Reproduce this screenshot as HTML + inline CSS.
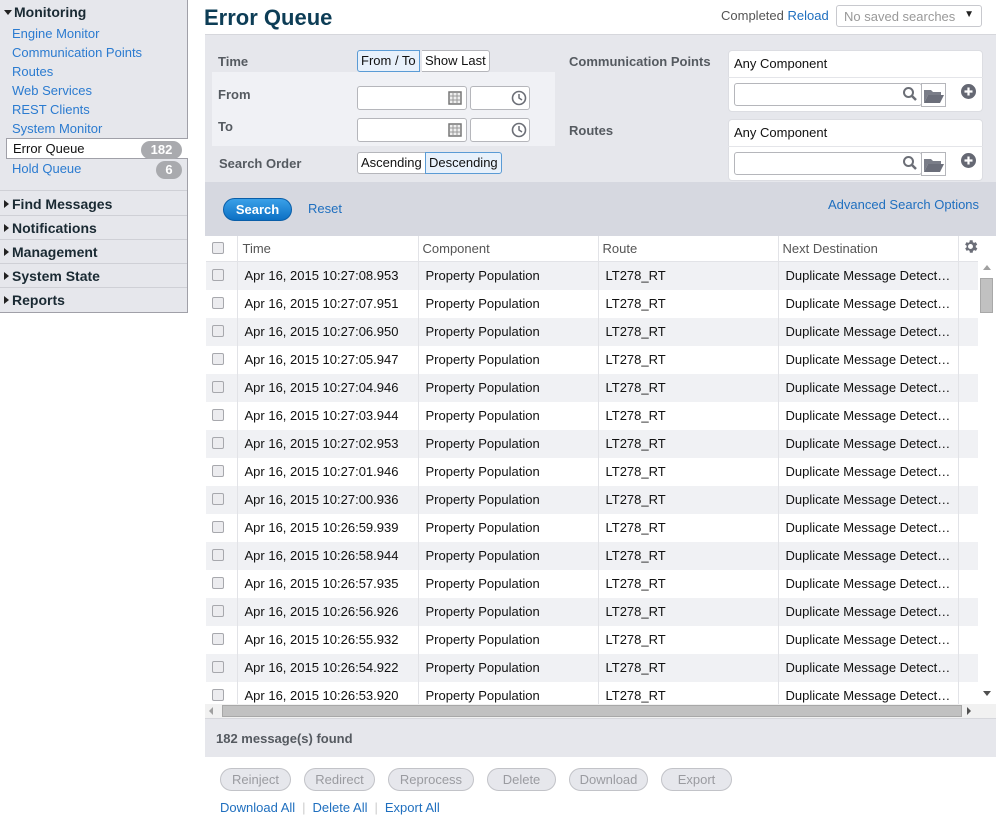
<!DOCTYPE html>
<html><head><meta charset="utf-8"><style>
*{box-sizing:border-box;margin:0;padding:0}
body{width:998px;height:827px;background:#fff;font-family:"Liberation Sans",Arial,sans-serif;font-size:13px;color:#111;position:relative;overflow:hidden}
.a{position:absolute}
a,.lk{color:#1f6fbf;text-decoration:none}
#side{left:0;top:0;width:188px;height:313px;background:#e6e7ec;border-right:1px solid #a0a0a8;border-bottom:1px solid #a0a0a8}
.hd{font-weight:bold;font-size:14px;color:#1a2a33;left:4px}
.sl{left:12px;font-size:13px;color:#2b7bd0}
.sep{left:0;width:187px;height:1px;background:#cfd0d6}
.badge{background:#a9aaae;color:#fff;font-weight:bold;border-radius:10px;text-align:center;font-size:13px;height:18px;line-height:18px}
.tri{display:inline-block;width:0;height:0;border-top:4px solid transparent;border-bottom:4px solid transparent;border-left:5px solid #222;margin-right:3px;vertical-align:1px}
.lbl{font-weight:bold;color:#555a60;font-size:13px}
.inp{background:#fff;border:1px solid #b5b6bb;border-radius:3px;height:24px}
.seg{border:1px solid #b5b6bb;background:#fff;height:22px;line-height:20px;padding:0 3px;font-size:13px;color:#111}
.sel{background:#e8f1fb;border-color:#5a9bd5}
table{border-collapse:collapse;table-layout:fixed}
td{height:28px;padding-left:7px;white-space:nowrap;overflow:hidden;border-left:1px solid #e2e3e7;font-size:13px}
tr:nth-child(odd) td{background:#f0f1f4}
.cb{display:inline-block;width:12px;height:12px;border:1px solid #a7a8ad;border-radius:2px;background:#ececef;vertical-align:-1px}
.btn{border:1px solid #c2c3c8;border-radius:12px;background:#e6e7ec;color:#9a9ba0;height:23px;line-height:21px;text-align:center;font-size:13px;top:768px}
</style></head><body>

<div id="side" class="a">
<div class="a hd" style="top:4px"><span style="display:inline-block;border-left:4px solid transparent;border-right:4px solid transparent;border-top:5px solid #222;margin-right:2px;vertical-align:2px"></span>Monitoring</div>
<div class="a sl" style="top:26px">Engine Monitor</div>
<div class="a sl" style="top:45px">Communication Points</div>
<div class="a sl" style="top:64px">Routes</div>
<div class="a sl" style="top:83px">Web Services</div>
<div class="a sl" style="top:102px">REST Clients</div>
<div class="a sl" style="top:121px">System Monitor</div>
<div class="a" style="left:6px;top:138px;width:182px;height:21px;background:#fff;border:1px solid #a0a0a8;border-right:none"></div>
<div class="a" style="left:13px;top:141px;color:#111">Error Queue</div>
<div class="a badge" style="left:141px;top:141px;width:41px">182</div>
<div class="a sl" style="top:161px">Hold Queue</div>
<div class="a badge" style="left:156px;top:161px;width:26px">6</div>
<div class="a sep" style="top:190px"></div>
<div class="a hd" style="top:196px"><span class="tri"></span>Find Messages</div>
<div class="a sep" style="top:215px"></div>
<div class="a hd" style="top:220px"><span class="tri"></span>Notifications</div>
<div class="a sep" style="top:239px"></div>
<div class="a hd" style="top:244px"><span class="tri"></span>Management</div>
<div class="a sep" style="top:263px"></div>
<div class="a hd" style="top:268px"><span class="tri"></span>System State</div>
<div class="a sep" style="top:287px"></div>
<div class="a hd" style="top:292px"><span class="tri"></span>Reports</div>
</div>

<div class="a" style="left:204px;top:5px;font-size:22px;font-weight:bold;color:#0d3d56">Error Queue</div>
<div class="a" style="left:721px;top:8px;color:#555">Completed <span class="lk">Reload</span></div>
<div class="a" style="left:836px;top:5px;width:146px;height:22px;border:1px solid #c8c9ce;border-radius:3px;color:#999;padding:3px 7px">No saved searches<span style="position:absolute;right:7px;top:3px;color:#222;font-size:10px">▼</span></div>

<div class="a" style="left:205px;top:34px;width:791px;height:148px;background:#e6e7ec;border-top:1px solid #d6d7dc"></div>
<div class="a" style="left:212px;top:72px;width:343px;height:74px;background:#f0f1f5"></div>
<div class="a lbl" style="left:218px;top:54px">Time</div>
<div class="a seg sel" style="left:357px;top:50px;border-radius:3px 0 0 3px">From / To</div>
<div class="a seg" style="left:422px;top:50px;border-radius:0 3px 3px 0;border-left:none">Show Last</div>
<div class="a lbl" style="left:218px;top:87px">From</div>
<div class="a lbl" style="left:218px;top:119px">To</div>
<div class="a inp" style="left:357px;top:86px;width:110px"></div>
<div class="a inp" style="left:470px;top:86px;width:60px"></div>
<div class="a inp" style="left:357px;top:118px;width:110px"></div>
<div class="a inp" style="left:470px;top:118px;width:60px"></div>
<svg class="a" style="left:448px;top:91px" width="14" height="14"><rect x="1" y="1" width="12" height="12" fill="#eee" stroke="#777" stroke-width="1.5"/><path d="M5 2v10M9 2v10M2 5h10M2 9h10" stroke="#999"/></svg>
<svg class="a" style="left:448px;top:123px" width="14" height="14"><rect x="1" y="1" width="12" height="12" fill="#eee" stroke="#777" stroke-width="1.5"/><path d="M5 2v10M9 2v10M2 5h10M2 9h10" stroke="#999"/></svg>
<svg class="a" style="left:511px;top:90px" width="16" height="16"><circle cx="8" cy="8" r="6.5" fill="#fff" stroke="#6b6e76" stroke-width="1.6"/><path d="M8 4v4l3 2" stroke="#6b6e76" stroke-width="1.5" fill="none"/></svg>
<svg class="a" style="left:511px;top:122px" width="16" height="16"><circle cx="8" cy="8" r="6.5" fill="#fff" stroke="#6b6e76" stroke-width="1.6"/><path d="M8 4v4l3 2" stroke="#6b6e76" stroke-width="1.5" fill="none"/></svg>
<div class="a lbl" style="left:219px;top:156px">Search Order</div>
<div class="a seg" style="left:357px;top:152px;border-radius:3px 0 0 3px">Ascending</div>
<div class="a seg sel" style="left:425px;top:152px;border-radius:0 3px 3px 0">Descending</div>

<div class="a lbl" style="left:569px;top:54px">Communication Points</div>
<div class="a lbl" style="left:569px;top:123px">Routes</div>
<div class="a" style="left:728px;top:50px;width:255px;height:62px;background:#fff;border-radius:4px;border:1px solid #dcdde2"></div>
<div class="a" style="left:728px;top:77px;width:255px;height:1px;background:#e4e5e9"></div>
<div class="a" style="left:734px;top:56px">Any Component</div>
<div class="a inp" style="left:734px;top:83px;width:188px;height:23px"></div>
<div class="a" style="left:921px;top:83px;width:25px;height:24px;border:1px solid #b5b6bb;background:#fff"></div>
<div class="a" style="left:728px;top:119px;width:255px;height:62px;background:#fff;border-radius:4px;border:1px solid #dcdde2"></div>
<div class="a" style="left:728px;top:146px;width:255px;height:1px;background:#e4e5e9"></div>
<div class="a" style="left:734px;top:125px">Any Component</div>
<div class="a inp" style="left:734px;top:152px;width:188px;height:23px"></div>
<div class="a" style="left:921px;top:152px;width:25px;height:24px;border:1px solid #b5b6bb;background:#fff"></div>
<svg class="a" style="left:902px;top:86px" width="16" height="16"><circle cx="6.5" cy="6.5" r="4.5" fill="none" stroke="#6b6e76" stroke-width="2"/><path d="M10 10l4 4" stroke="#6b6e76" stroke-width="2.5"/></svg>
<svg class="a" style="left:902px;top:155px" width="16" height="16"><circle cx="6.5" cy="6.5" r="4.5" fill="none" stroke="#6b6e76" stroke-width="2"/><path d="M10 10l4 4" stroke="#6b6e76" stroke-width="2.5"/></svg>
<svg class="a" style="left:923px;top:87px" width="22" height="17"><path d="M1 3h7l2 2h8v3H5L1 16z" fill="#7a7d88"/><path d="M5 8h16l-4 8H1z" fill="#6b6e7a"/></svg>
<svg class="a" style="left:923px;top:156px" width="22" height="17"><path d="M1 3h7l2 2h8v3H5L1 16z" fill="#7a7d88"/><path d="M5 8h16l-4 8H1z" fill="#6b6e7a"/></svg>
<svg class="a" style="left:961px;top:84px" width="15" height="15"><circle cx="7.5" cy="7.5" r="7.5" fill="#656873"/><path d="M7.5 3.5v8M3.5 7.5h8" stroke="#fff" stroke-width="2.2"/></svg>
<svg class="a" style="left:961px;top:153px" width="15" height="15"><circle cx="7.5" cy="7.5" r="7.5" fill="#656873"/><path d="M7.5 3.5v8M3.5 7.5h8" stroke="#fff" stroke-width="2.2"/></svg>

<div class="a" style="left:205px;top:182px;width:791px;height:54px;background:#d6d8e0"></div>
<div class="a" style="left:223px;top:198px;width:69px;height:23px;border-radius:12px;background:linear-gradient(#3aa0e8,#0c70c4);border:1px solid #0a5ea8;color:#fff;font-weight:bold;text-align:center;line-height:21px">Search</div>
<div class="a lk" style="left:308px;top:201px">Reset</div>
<div class="a lk" style="left:828px;top:197px">Advanced Search Options</div>

<div class="a" style="left:205px;top:236px;width:791px;height:482px;background:#fff;overflow:hidden">
<table style="width:775px;margin-left:1px">
<colgroup><col style="width:31px"><col style="width:181px"><col style="width:180px"><col style="width:180px"><col style="width:180px"><col style="width:23px"></colgroup>
<tr><td style="background:#fff;height:25px;border-left:none;padding-left:6px;border-bottom:1px solid #e2e3e7"><span class="cb"></span></td><td style="background:#fff;height:25px;color:#555;border-bottom:1px solid #e2e3e7;padding-left:5px">Time</td><td style="background:#fff;height:25px;color:#555;border-bottom:1px solid #e2e3e7;padding-left:4px">Component</td><td style="background:#fff;height:25px;color:#555;border-bottom:1px solid #e2e3e7;padding-left:4px">Route</td><td style="background:#fff;height:25px;color:#555;border-bottom:1px solid #e2e3e7;padding-left:4px">Next Destination</td><td style="background:#fff;height:25px;border-bottom:1px solid #e2e3e7;padding-left:3px"><svg width="17" height="17" viewBox="0 0 24 24"><path fill="#6b6e78" d="M19.4 13a7.6 7.6 0 000-2l2.1-1.6-2-3.5-2.5 1a7.3 7.3 0 00-1.7-1L15 3.2h-4l-.4 2.7a7.3 7.3 0 00-1.7 1l-2.5-1-2 3.5L6.6 11a7.6 7.6 0 000 2l-2.1 1.6 2 3.5 2.5-1a7.3 7.3 0 001.7 1l.4 2.7h4l.4-2.7a7.3 7.3 0 001.7-1l2.5 1 2-3.5zM12 15.5A3.5 3.5 0 1112 8.5a3.5 3.5 0 010 7z"/></svg></td></tr>
</table>
<table style="width:775px;margin-left:1px">
<colgroup><col style="width:31px"><col style="width:181px"><col style="width:180px"><col style="width:180px"><col style="width:180px"><col style="width:23px"></colgroup>
<tr><td style="border-left:none;padding-left:6px"><span class="cb"></span></td><td>Apr 16, 2015 10:27:08.953</td><td>Property Population</td><td>LT278_RT</td><td>Duplicate Message Detect…</td><td></td></tr>
<tr><td style="border-left:none;padding-left:6px"><span class="cb"></span></td><td>Apr 16, 2015 10:27:07.951</td><td>Property Population</td><td>LT278_RT</td><td>Duplicate Message Detect…</td><td></td></tr>
<tr><td style="border-left:none;padding-left:6px"><span class="cb"></span></td><td>Apr 16, 2015 10:27:06.950</td><td>Property Population</td><td>LT278_RT</td><td>Duplicate Message Detect…</td><td></td></tr>
<tr><td style="border-left:none;padding-left:6px"><span class="cb"></span></td><td>Apr 16, 2015 10:27:05.947</td><td>Property Population</td><td>LT278_RT</td><td>Duplicate Message Detect…</td><td></td></tr>
<tr><td style="border-left:none;padding-left:6px"><span class="cb"></span></td><td>Apr 16, 2015 10:27:04.946</td><td>Property Population</td><td>LT278_RT</td><td>Duplicate Message Detect…</td><td></td></tr>
<tr><td style="border-left:none;padding-left:6px"><span class="cb"></span></td><td>Apr 16, 2015 10:27:03.944</td><td>Property Population</td><td>LT278_RT</td><td>Duplicate Message Detect…</td><td></td></tr>
<tr><td style="border-left:none;padding-left:6px"><span class="cb"></span></td><td>Apr 16, 2015 10:27:02.953</td><td>Property Population</td><td>LT278_RT</td><td>Duplicate Message Detect…</td><td></td></tr>
<tr><td style="border-left:none;padding-left:6px"><span class="cb"></span></td><td>Apr 16, 2015 10:27:01.946</td><td>Property Population</td><td>LT278_RT</td><td>Duplicate Message Detect…</td><td></td></tr>
<tr><td style="border-left:none;padding-left:6px"><span class="cb"></span></td><td>Apr 16, 2015 10:27:00.936</td><td>Property Population</td><td>LT278_RT</td><td>Duplicate Message Detect…</td><td></td></tr>
<tr><td style="border-left:none;padding-left:6px"><span class="cb"></span></td><td>Apr 16, 2015 10:26:59.939</td><td>Property Population</td><td>LT278_RT</td><td>Duplicate Message Detect…</td><td></td></tr>
<tr><td style="border-left:none;padding-left:6px"><span class="cb"></span></td><td>Apr 16, 2015 10:26:58.944</td><td>Property Population</td><td>LT278_RT</td><td>Duplicate Message Detect…</td><td></td></tr>
<tr><td style="border-left:none;padding-left:6px"><span class="cb"></span></td><td>Apr 16, 2015 10:26:57.935</td><td>Property Population</td><td>LT278_RT</td><td>Duplicate Message Detect…</td><td></td></tr>
<tr><td style="border-left:none;padding-left:6px"><span class="cb"></span></td><td>Apr 16, 2015 10:26:56.926</td><td>Property Population</td><td>LT278_RT</td><td>Duplicate Message Detect…</td><td></td></tr>
<tr><td style="border-left:none;padding-left:6px"><span class="cb"></span></td><td>Apr 16, 2015 10:26:55.932</td><td>Property Population</td><td>LT278_RT</td><td>Duplicate Message Detect…</td><td></td></tr>
<tr><td style="border-left:none;padding-left:6px"><span class="cb"></span></td><td>Apr 16, 2015 10:26:54.922</td><td>Property Population</td><td>LT278_RT</td><td>Duplicate Message Detect…</td><td></td></tr>
<tr><td style="border-left:none;padding-left:6px"><span class="cb"></span></td><td>Apr 16, 2015 10:26:53.920</td><td>Property Population</td><td>LT278_RT</td><td>Duplicate Message Detect…</td><td></td></tr>
</table>
</div>
<div class="a" style="left:978px;top:261px;width:16px;height:443px;background:#fff"></div>
<div class="a" style="left:983px;top:265px;width:0;height:0;border-left:4px solid transparent;border-right:4px solid transparent;border-bottom:5px solid #a0a0a0"></div>
<div class="a" style="left:980px;top:278px;width:13px;height:35px;background:#c1c1c1;border:1px solid #a8a8a8"></div>
<div class="a" style="left:983px;top:691px;width:0;height:0;border-left:4px solid transparent;border-right:4px solid transparent;border-top:5px solid #505050"></div>
<div class="a" style="left:205px;top:704px;width:791px;height:14px;background:#f1f1f1"></div>
<div class="a" style="left:209px;top:707px;width:0;height:0;border-top:4px solid transparent;border-bottom:4px solid transparent;border-right:4px solid #a0a0a0"></div>
<div class="a" style="left:222px;top:705px;width:740px;height:12px;background:#c1c1c1;border:1px solid #a8a8a8"></div>
<div class="a" style="left:967px;top:707px;width:0;height:0;border-top:4px solid transparent;border-bottom:4px solid transparent;border-left:4px solid #505050"></div>

<div class="a" style="left:205px;top:718px;width:791px;height:39px;background:#e6e7ec;border-top:1px solid #d6d7dc"></div>
<div class="a" style="left:216px;top:731px;font-weight:bold;color:#555a60">182 message(s) found</div>

<div class="a btn" style="left:220px;width:71px">Reinject</div>
<div class="a btn" style="left:304px;width:71px">Redirect</div>
<div class="a btn" style="left:388px;width:86px">Reprocess</div>
<div class="a btn" style="left:487px;width:69px">Delete</div>
<div class="a btn" style="left:569px;width:79px">Download</div>
<div class="a btn" style="left:661px;width:71px">Export</div>

<div class="a" style="left:220px;top:800px;font-size:13px"><span class="lk">Download All</span><span style="color:#ccc;margin:0 7px">|</span><span class="lk">Delete All</span><span style="color:#ccc;margin:0 7px">|</span><span class="lk">Export All</span></div>
</body></html>
